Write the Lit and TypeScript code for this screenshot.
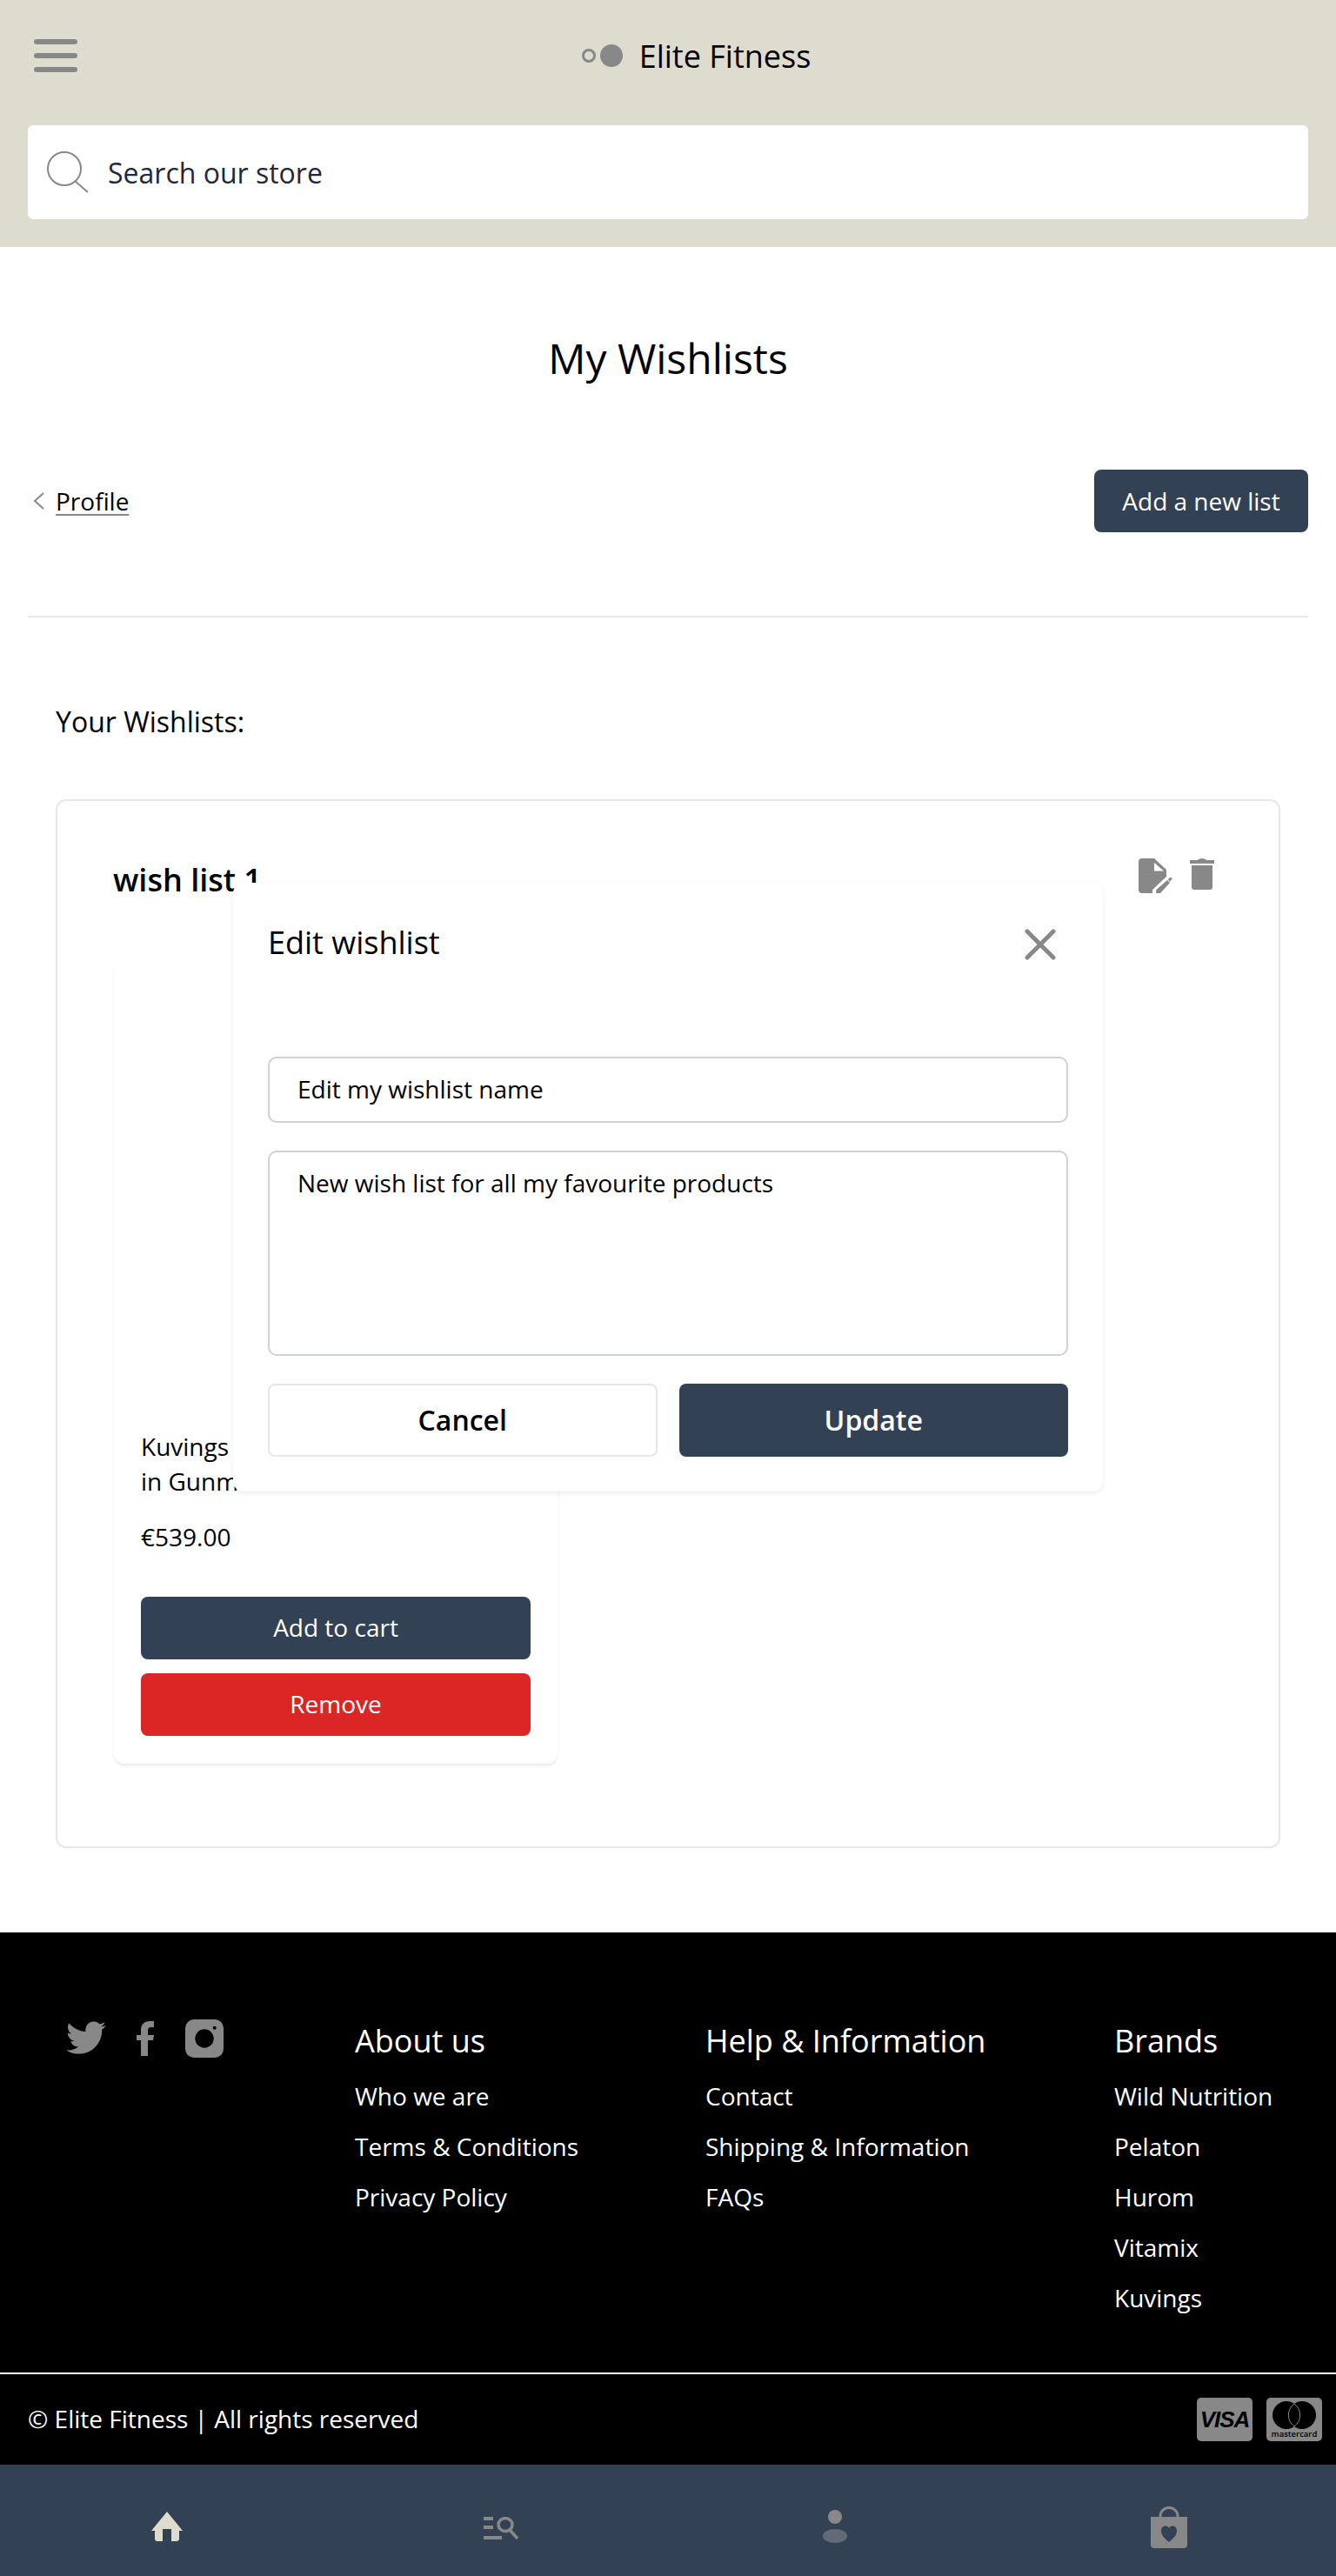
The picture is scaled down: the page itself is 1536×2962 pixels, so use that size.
import { LitElement, html, css } from "lit";
import { customElement } from "lit/decorators.js";

const footerColumns = [
  { title: "About us", links: ["Who we are", "Terms & Conditions", "Privacy Policy"] },
  { title: "Help & Information", links: ["Contact", "Shipping & Information", "FAQs"] },
  { title: "Brands", links: ["Wild Nutrition", "Pelaton", "Hurom", "Vitamix", "Kuvings"] },
];

@customElement("app-root")
export class AppRoot extends LitElement {
  static styles = css`
    :host {
      display: block;
      font-family: "Open Sans", "Noto Sans", sans-serif;
      color: #000;
      background: #fff;
    }
    * {
      box-sizing: border-box;
    }
    svg {
      display: block;
      flex-shrink: 0;
    }

    /* header */
    .top {
      height: 284px;
      background: #dedbcf;
      padding: 45px 32px 32px;
    }
    .top-row {
      position: relative;
      display: flex;
      justify-content: center;
      align-items: center;
      height: 38px;
      margin-bottom: 61px;
    }
    .burger {
      position: absolute;
      left: 7px;
      top: 0;
      display: flex;
      flex-direction: column;
      gap: 10px;
    }
    .burger span {
      display: block;
      width: 50px;
      height: 6px;
      border-radius: 3px;
      background: #888;
    }
    .brand {
      display: flex;
      align-items: center;
      gap: 19px;
      font-size: 36px;
      line-height: 48px;
      margin-left: 65px;
    }
    .brand span {
      padding-top: 2px;
    }
    .search {
      display: flex;
      align-items: center;
      gap: 23px;
      height: 108px;
      padding: 0 0 0 22px;
      background: #fff;
      border-radius: 6px;
      font-size: 32px;
      color: #1f2937;
    }

    /* page */
    main {
      padding: 96px 32px 97px;
    }
    h1 {
      margin: 0;
      font-size: 48px;
      line-height: 64px;
      font-weight: 400;
      text-align: center;
    }
    .actions {
      display: flex;
      justify-content: space-between;
      align-items: center;
      margin-top: 96px;
    }
    .back {
      display: flex;
      align-items: center;
      gap: 13px;
      padding-left: 6px;
      font-size: 28px;
      text-decoration: underline;
      text-decoration-color: #888;
      text-decoration-thickness: 2px;
      text-underline-offset: 4px;
    }
    .btn {
      display: flex;
      align-items: center;
      justify-content: center;
      height: 72px;
      border-radius: 8px;
      background: #334155;
      color: #fff;
      font-size: 28px;
    }
    .new-list {
      width: 246px;
    }
    hr {
      margin: 96px 0 0;
      border: 0;
      height: 2px;
      background: #e5e7eb;
    }
    .lists-title {
      margin: 96px 0 0 32px;
      font-size: 32px;
      line-height: 48px;
    }
    .list-card {
      position: relative;
      margin: 65px 32px 0;
      height: 1206px;
      padding: 64px 65px 0;
      border: 2px solid #e5e7eb;
      border-radius: 12px;
    }
    .list-head {
      display: flex;
      justify-content: space-between;
      height: 54px;
    }
    .list-head h2 {
      margin: 0 0 0 -1px;
      font-size: 36px;
      line-height: 54px;
      font-weight: 600;
    }
    .list-tools {
      display: flex;
      gap: 20px;
      margin: 2px 9px 0 0;
    }
    .product {
      width: 510px;
      height: 921px;
      margin-top: 68px;
      padding: 536px 31px 0;
      border-radius: 12px;
      background: #fff;
      box-shadow: 0 3px 4px -1px rgba(0, 0, 0, 0.1), 0 0 1px rgba(0, 0, 0, 0.04);
      font-size: 28px;
      line-height: 40px;
    }
    .price {
      margin: 24px 0 49px;
    }
    .product .btn {
      padding-bottom: 2px;
    }
    .product .btn + .btn {
      margin-top: 16px;
    }
    .btn.danger {
      background: #dc2626;
    }

    /* edit modal */
    .modal {
      position: absolute;
      left: 202px;
      top: 94px;
      width: 1000px;
      height: 700px;
      padding: 40px;
      background: #fff;
      border-radius: 12px;
      box-shadow: 0 2px 6px rgba(0, 0, 0, 0.08);
    }
    .modal-head {
      display: flex;
      justify-content: space-between;
      align-items: flex-start;
      height: 160px;
    }
    .modal-head span {
      font-size: 36px;
      line-height: 54px;
      padding-top: 2px;
    }
    .close {
      margin: 13px 14px 0 0;
    }
    .field {
      height: 76px;
      padding: 0 32px;
      border: 2px solid #cdd0d8;
      border-radius: 10px;
      font-size: 28px;
      line-height: 70px;
    }
    .field.area {
      height: 236px;
      margin-top: 32px;
      line-height: 36px;
      padding-top: 17px;
    }
    .modal-btns {
      display: flex;
      gap: 25px;
      margin-top: 32px;
    }
    .modal-btns div {
      flex: 1 1 400px;
      display: flex;
      align-items: center;
      justify-content: center;
      height: 84px;
      padding-bottom: 2px;
      border-radius: 8px;
      font-size: 32px;
      font-weight: 600;
    }
    .cancel {
      border: 2px solid #e5e7eb;
    }
    .update {
      background: #334155;
      color: #fff;
    }

    /* footer */
    footer {
      background: #000;
      color: #fff;
    }
    .foot-cols {
      display: grid;
      grid-template-columns: 332px 403px 470px auto;
      height: 506px;
      padding: 101px 0 0 76px;
    }
    .social {
      display: flex;
      align-items: center;
      align-self: start;
      gap: 35px;
      margin-top: -1px;
    }
    .social .fb {
      margin-right: 1px;
    }
    .foot-col h3 {
      margin: 0 0 19px;
      font-size: 36px;
      line-height: 48px;
      font-weight: 400;
    }
    .foot-col div {
      font-size: 28px;
      line-height: 40px;
      margin-bottom: 18px;
    }
    .legal {
      display: flex;
      justify-content: space-between;
      align-items: center;
      height: 106px;
      padding: 0 16px 0 32px;
      border-top: 2px solid #fff;
      font-size: 28px;
    }
    .legal > span {
      padding-bottom: 2px;
    }
    .cards {
      display: flex;
      gap: 16px;
    }
    .pay {
      position: relative;
      width: 64px;
      height: 50px;
      border-radius: 5px;
      background: #888;
      color: #000;
      text-align: center;
    }
    .visa {
      font-family: "Liberation Sans", sans-serif;
      font-size: 26px;
      font-weight: 700;
      font-style: italic;
      line-height: 50px;
      letter-spacing: -1px;
    }
    .mc-label {
      position: absolute;
      left: 0;
      right: 0;
      bottom: 3px;
      font-size: 9.5px;
      line-height: 10px;
      font-weight: 600;
    }

    /* bottom tabs */
    .tabs {
      display: grid;
      grid-template-columns: repeat(4, 1fr);
      height: 128px;
      background: #334155;
    }
    .tabs div {
      display: flex;
      justify-content: center;
    }
    .tabs .home {
      padding-top: 54px;
    }
    .tabs .browse {
      padding-top: 60px;
    }
    .tabs .account {
      padding-top: 52px;
    }
    .tabs .bag {
      padding-top: 48px;
    }
  `;

  render() {
    return html`
      <header class="top">
        <div class="top-row">
          <div class="burger"><span></span><span></span><span></span></div>
          <div class="brand">
            <svg width="47" height="26" viewBox="0 0 47 26">
              <circle cx="8" cy="13" r="6.5" fill="none" stroke="#888" stroke-width="3" />
              <circle cx="34" cy="13" r="13" fill="#888" />
            </svg>
            <span>Elite Fitness</span>
          </div>
        </div>
        <div class="search">
          <svg width="47" height="48" viewBox="0 0 47 48" fill="none" stroke="#888" stroke-width="2">
            <circle cx="20" cy="20" r="19" />
            <path d="M32 34l15 13" />
          </svg>
          <span>Search our store</span>
        </div>
      </header>

      <main>
        <h1>My Wishlists</h1>
        <div class="actions">
          <div class="back">
            <svg width="13" height="20" viewBox="0 0 13 20" fill="none" stroke="#888" stroke-width="2">
              <path d="M12 1L2 10l10 9" />
            </svg>
            <span>Profile</span>
          </div>
          <div class="btn new-list">Add a new list</div>
        </div>
        <hr />
        <div class="lists-title">Your Wishlists:</div>

        <section class="list-card">
          <div class="list-head">
            <h2>wish list 1</h2>
            <div class="list-tools">
              <svg width="39" height="40" viewBox="0 0 39 40" fill="#888">
                <path d="M4 0h14L32 13v8L16 36v4H4a4 4 0 0 1-4-4V4a4 4 0 0 1 4-4z" />
                <path fill="#fff" d="M18 5l11 9.5H18z" />
                <path d="M20.5 36L33 25l3 3-11 12h-5z" />
                <path d="M34 24l3-2.5 1.8 2L35.5 27z" />
              </svg>
              <svg width="28" height="36" viewBox="0 0 28 36">
                <path d="M0 2h9c1-2.5 9-2.5 10 0h9v4H0z" fill="#888" />
                <path d="M2 8h24v25a3 3 0 0 1-3 3H5a3 3 0 0 1-3-3z" fill="#888" />
              </svg>
            </div>
          </div>

          <article class="product">
            <div>Kuvings Whole Slow Juicer EVO<br />in Gunmetal</div>
            <div class="price">€539.00</div>
            <div class="btn">Add to cart</div>
            <div class="btn danger">Remove</div>
          </article>

          <div class="modal">
            <div class="modal-head">
              <span>Edit wishlist</span>
              <svg class="close" width="36" height="36" viewBox="0 0 36 36" stroke="#888" stroke-width="5" stroke-linecap="round">
                <path d="M3 3l30 30M33 3L3 33" />
              </svg>
            </div>
            <div class="field">Edit my wishlist name</div>
            <div class="field area">New wish list for all my favourite products</div>
            <div class="modal-btns">
              <div class="cancel">Cancel</div>
              <div class="update">Update</div>
            </div>
          </div>
        </section>
      </main>

      <footer>
        <div class="foot-cols">
          <div class="social">
            <svg width="46" height="40" viewBox="0 0 24 21" fill="#888">
              <path
                d="M23.953 2.57a10 10 0 0 1-2.825.775 4.958 4.958 0 0 0 2.163-2.723c-.951.555-2.005.959-3.127 1.184a4.92 4.92 0 0 0-8.384 4.482C7.69 6.095 4.067 4.13 1.64 1.162a4.822 4.822 0 0 0-.666 2.475c0 1.71.87 3.213 2.188 4.096a4.904 4.904 0 0 1-2.228-.616v.06a4.923 4.923 0 0 0 3.946 4.827 4.996 4.996 0 0 1-2.212.085 4.936 4.936 0 0 0 4.604 3.417 9.867 9.867 0 0 1-6.102 2.105c-.39 0-.779-.023-1.17-.067a13.995 13.995 0 0 0 7.557 2.209c9.053 0 13.998-7.496 13.998-13.985 0-.21 0-.42-.015-.63A9.935 9.935 0 0 0 24 2.59z"
              />
            </svg>
            <svg class="fb" width="20" height="40" viewBox="0 0 20 40" fill="#888">
              <path d="M13 40V22h6l1-6h-7v-5c0-2 1-4 3.5-4H20V0h-5C9 0 5 4 5 10v6H0v6h5v18z" />
            </svg>
            <svg width="44" height="44" viewBox="0 0 44 44">
              <rect width="44" height="44" rx="10" fill="#888" />
              <circle cx="22" cy="22" r="10.7" fill="#000" />
              <circle cx="33.7" cy="9.7" r="2" fill="#000" />
            </svg>
          </div>
          ${footerColumns.map(
            (col) => html`
              <div class="foot-col">
                <h3>${col.title}</h3>
                ${col.links.map((link) => html`<div>${link}</div>`)}
              </div>
            `
          )}
        </div>
        <div class="legal">
          <span>© Elite Fitness | All rights reserved</span>
          <div class="cards">
            <div class="pay visa">VISA</div>
            <div class="pay">
              <svg width="64" height="38" viewBox="0 0 64 38">
                <circle cx="23" cy="20" r="16" fill="#000" />
                <circle cx="41" cy="20" r="16" fill="#000" />
                <path
                  fill="#000"
                  stroke="#888"
                  stroke-width="1"
                  d="M32 7a16 16 0 0 1 0 26 16 16 0 0 1 0-26z"
                />
              </svg>
              <span class="mc-label">mastercard</span>
            </div>
          </div>
        </div>
      </footer>

      <nav class="tabs">
        <div class="home">
          <svg width="36" height="34" viewBox="0 0 36 34" fill="#dedbcf">
            <path d="M18 0l18 22h-4v9a3 3 0 0 1-3 3h-6V20h-10v14H7a3 3 0 0 1-3-3v-9H0z" />
          </svg>
        </div>
        <div class="browse">
          <svg width="41" height="26" viewBox="0 0 41 26" fill="none" stroke="#888">
            <path stroke-width="4" d="M0 2h11M0 12h11M0 24h21" />
            <ellipse cx="25" cy="9" rx="8" ry="7.5" stroke-width="3.5" />
            <path stroke-width="3.5" d="M30 15l9 10" />
          </svg>
        </div>
        <div class="account">
          <svg width="28" height="38" viewBox="0 0 28 38">
            <ellipse cx="14" cy="8" rx="8" ry="8" fill="#888" />
            <ellipse cx="14" cy="30" rx="14" ry="8" fill="#616a77" />
          </svg>
        </div>
        <div class="bag">
          <svg width="42" height="48" viewBox="0 0 42 48">
            <path fill="none" stroke="#888" stroke-width="3" d="M11 14V11a10 9.5 0 0 1 20 0v3" />
            <path fill="#888" d="M0 12h42v32a4 4 0 0 1-4 4H4a4 4 0 0 1-4-4z" />
            <path
              fill="#334155"
              d="M21 41c-5-4-9-8-9-13 0-6 7-7 9-3 2-4 9-3 9 3 0 5-4 9-9 13z"
            />
          </svg>
        </div>
      </nav>
    `;
  }
}
